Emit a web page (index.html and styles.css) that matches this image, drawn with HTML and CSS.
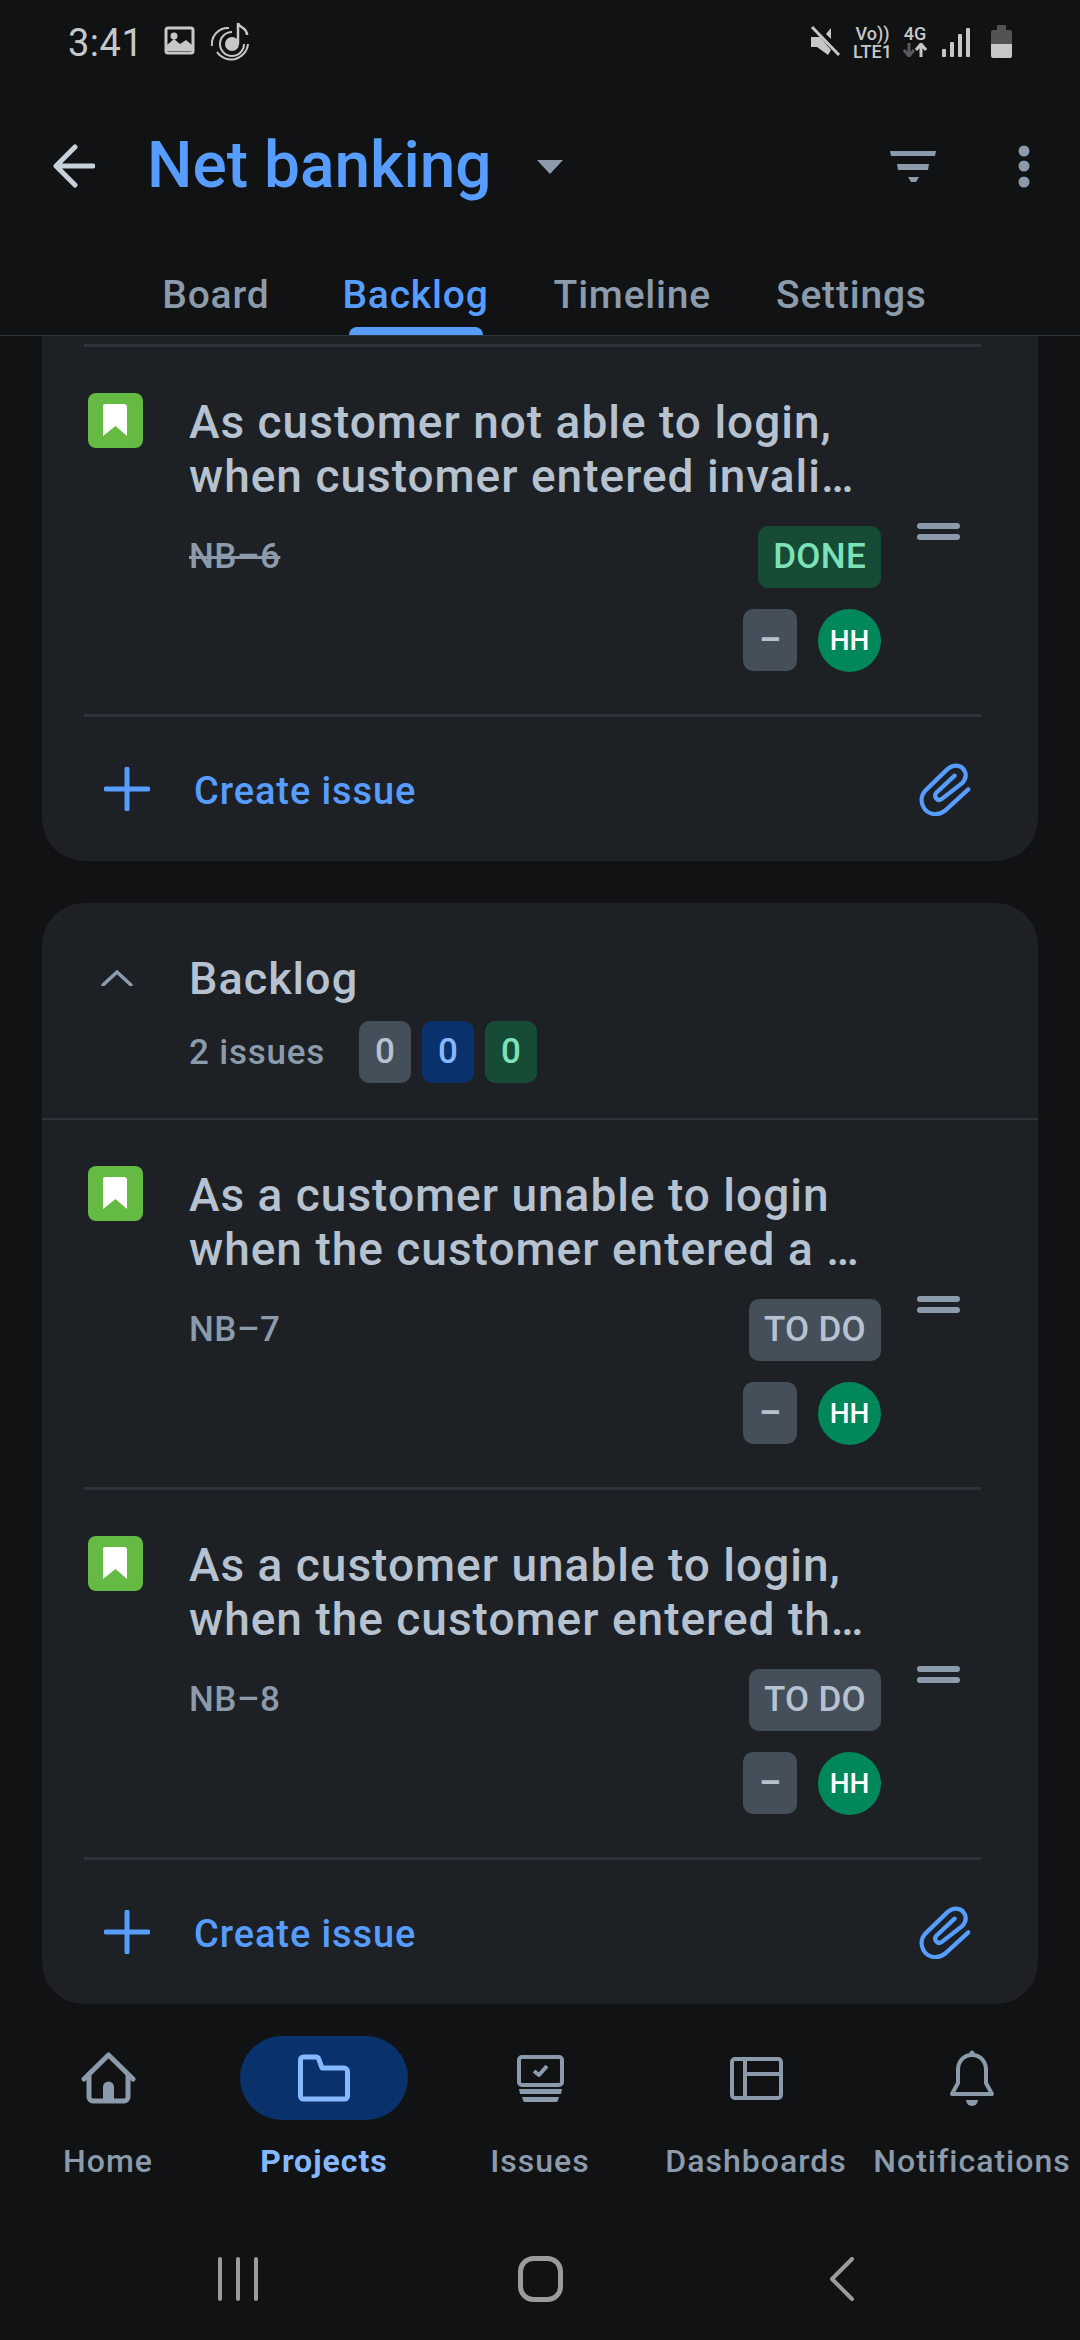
FILE: index.html
```html
<!DOCTYPE html>
<html lang="en">
<head>
    <meta charset="UTF-8">
    <meta name="viewport" content="width=device-width, initial-scale=1.0">
    <title>Net banking</title>
    <link rel="stylesheet" href="styles.css">
</head>
<body>

<svg class="icon-defs" width="0" height="0">
    <symbol id="bookmark" viewBox="0 0 55 55">
        <rect width="55" height="55" rx="8" fill="#65ba43"/>
        <path d="M17 11h19a3 3 0 0 1 3 3v29l-11.500-10L15 43V13a2 2 0 0 1 2-2z" fill="#fff"/>
    </symbol>
    <symbol id="drag" viewBox="0 0 43 17">
        <rect y="0" width="43" height="6" rx="3" fill="#8c9bab"/>
        <rect y="11" width="43" height="6" rx="3" fill="#8c9bab"/>
    </symbol>
    <symbol id="plus" viewBox="0 0 46 44">
        <path d="M23 2v40M2 22h42" stroke="#579dff" stroke-width="5" stroke-linecap="round" fill="none"/>
    </symbol>
    <symbol id="clip" viewBox="118 62 160 166">
        <path d="M268 146L196 212C170 232 140 220 130 200C120 180 124 160 140 146L204 84C225 66 250 72 258 92C264 108 258 118 248 128L186 176C174 184 160 170 170 156L226 104" stroke="#579dff" stroke-width="13" stroke-linecap="round" fill="none"/>
    </symbol>
</svg>

<div class="status-bar">
    <span class="clock">3:41</span>
    <svg class="st-image" width="31" height="29" viewBox="0 0 31 29">
        <rect x="2" y="2" width="27" height="25" rx="2" fill="none" stroke="#c6c8c7" stroke-width="3"/>
        <circle cx="10" cy="10" r="3.500" fill="#c6c8c7"/>
        <path d="M3 25v-6l7-6 6 5 6-4 6 5v6z" fill="#c6c8c7"/>
    </svg>
    <svg class="st-music" width="38" height="39" viewBox="0 0 38 39">
        <g fill="none" stroke="#c6c8c7" stroke-width="2">
            <path d="M21 10A12 12 0 1 0 33 22"/>
            <path d="M18 6A16 16 0 0 0 1 24"/>
            <path d="M6 30A17 17 0 0 0 37 22"/>
        </g>
        <circle cx="21" cy="22" r="7" fill="#c6c8c7"/>
        <path d="M27 22V1c1 5 9 4 9 12" fill="none" stroke="#c6c8c7" stroke-width="2.500"/>
    </svg>
    <div class="status-right">
        <svg class="st-mute" width="31" height="32" viewBox="0 0 31 32">
            <path d="M1 12h6l3 0 11 13-3 5-11-8H1z" fill="#c6c8c7"/>
            <path d="M16 9l5-6v11z" fill="#c6c8c7"/>
            <path d="M2 2l27 28" stroke="#c6c8c7" stroke-width="3"/>
        </svg>
        <div class="st-net">
            <span>Vo))</span>
            <span>LTE1</span>
        </div>
        <div class="st-net st-data">
            <span>4G</span>
            <svg width="24" height="14" viewBox="0 0 24 14">
                <path d="M6 0v12M1 7l5 6 5-6" stroke="#5a5b5c" stroke-width="3" fill="none"/>
                <path d="M18 14V2M13 7l5-6 5 6" stroke="#c6c8c7" stroke-width="3" fill="none"/>
            </svg>
        </div>
        <svg class="st-signal" width="28" height="30" viewBox="0 0 28 30">
            <rect x="0" y="22" width="4" height="8" rx="1" fill="#c6c8c7"/>
            <rect x="8" y="15" width="4" height="15" rx="1" fill="#c6c8c7"/>
            <rect x="16" y="7" width="4" height="23" rx="1" fill="#c6c8c7"/>
            <rect x="24" y="1" width="4" height="29" rx="1" fill="#c6c8c7"/>
        </svg>
        <svg class="st-battery" width="21" height="33" viewBox="0 0 21 33">
            <rect x="6" y="0" width="9" height="6" rx="1" fill="#525354"/>
            <path d="M2 5h17a2 2 0 0 1 2 2v12H0V7a2 2 0 0 1 2-2z" fill="#525354"/>
            <path d="M0 19h21v12a2 2 0 0 1-2 2H2a2 2 0 0 1-2-2z" fill="#c6c8c7"/>
        </svg>
    </div>
</div>

<header class="app-bar">
    <svg class="back" width="42" height="44" viewBox="0 0 42 44">
        <path d="M22 3L3 22l19 19M4 22h36" stroke="#c7d1db" stroke-width="5" stroke-linecap="round" stroke-linejoin="round" fill="none"/>
    </svg>
    <h1 class="project">Net banking</h1>
    <svg class="caret" width="26" height="14" viewBox="0 0 26 14">
        <path d="M0 0h26L13 14z" fill="#8c9bab"/>
    </svg>
    <svg class="filter" width="46" height="31" viewBox="0 0 46 31">
        <path d="M0 0h46l-1 5H1zM7 13h32l-1 6H8zM18 26h11l-3 5h-5z" fill="#8c9bab"/>
    </svg>
    <svg class="kebab" width="12" height="43" viewBox="0 0 12 43">
        <circle cx="6" cy="6" r="5.500" fill="#8c9bab"/>
        <circle cx="6" cy="21" r="5.500" fill="#8c9bab"/>
        <circle cx="6" cy="37" r="5.500" fill="#8c9bab"/>
    </svg>
</header>

<nav class="tabs">
    <div class="tab"><span>Board</span></div>
    <div class="tab active"><span>Backlog</span><i class="tab-mark"></i></div>
    <div class="tab"><span>Timeline</span></div>
    <div class="tab"><span>Settings</span></div>
</nav>

<main class="content">
    <section class="card card-cut">
        <div class="issue">
            <svg class="issue-type"><use href="#bookmark"/></svg>
            <div class="issue-body">
                <div class="issue-title">As customer not able to login,<br>when customer entered invali…</div>
                <div class="issue-meta">
                    <span class="issue-key done-key">NB–6</span>
                    <div class="issue-side">
                        <span class="lozenge lozenge-done">DONE</span>
                        <div class="issue-people">
                            <span class="priority">–</span>
                            <span class="avatar">HH</span>
                        </div>
                    </div>
                    <svg class="drag"><use href="#drag"/></svg>
                </div>
            </div>
        </div>
        <div class="create-row">
            <svg class="plus"><use href="#plus"/></svg>
            <span class="create-text">Create issue</span>
            <svg class="clip"><use href="#clip"/></svg>
        </div>
    </section>

    <section class="card">
        <div class="sprint-head">
            <svg class="chevron" width="32" height="16" viewBox="0 0 32 16">
                <path d="M2 15L16 2l14 13" stroke="#8c9bab" stroke-width="3.500" stroke-linecap="round" fill="none"/>
            </svg>
            <div>
                <div class="sprint-name">Backlog</div>
                <div class="sprint-info">
                    <span class="sprint-count">2 issues</span>
                    <span class="count count-grey">0</span>
                    <span class="count count-blue">0</span>
                    <span class="count count-green">0</span>
                </div>
            </div>
        </div>
        <div class="issue issue-first">
            <svg class="issue-type"><use href="#bookmark"/></svg>
            <div class="issue-body">
                <div class="issue-title">As a customer unable to login<br>when the customer entered a …</div>
                <div class="issue-meta">
                    <span class="issue-key">NB–7</span>
                    <div class="issue-side">
                        <span class="lozenge">TO DO</span>
                        <div class="issue-people">
                            <span class="priority">–</span>
                            <span class="avatar">HH</span>
                        </div>
                    </div>
                    <svg class="drag"><use href="#drag"/></svg>
                </div>
            </div>
        </div>
        <div class="issue">
            <svg class="issue-type"><use href="#bookmark"/></svg>
            <div class="issue-body">
                <div class="issue-title">As a customer unable to login,<br>when the customer entered th…</div>
                <div class="issue-meta">
                    <span class="issue-key">NB–8</span>
                    <div class="issue-side">
                        <span class="lozenge">TO DO</span>
                        <div class="issue-people">
                            <span class="priority">–</span>
                            <span class="avatar">HH</span>
                        </div>
                    </div>
                    <svg class="drag"><use href="#drag"/></svg>
                </div>
            </div>
        </div>
        <div class="create-row">
            <svg class="plus"><use href="#plus"/></svg>
            <span class="create-text">Create issue</span>
            <svg class="clip"><use href="#clip"/></svg>
        </div>
    </section>
</main>

<nav class="bottom-nav">
    <div class="nav-item">
        <div class="nav-icon">
            <svg width="55" height="52" viewBox="0 0 55 52">
                <g fill="none" stroke="#8c9bab" stroke-width="5" stroke-linecap="round" stroke-linejoin="round">
                    <path d="M3 27L27.500 3 52 27"/>
                    <path d="M8 23v22a4 4 0 0 0 4 4h31a4 4 0 0 0 4-4V23"/>
                </g>
                <path d="M22 49V35a5.500 5.500 0 0 1 11 0v14z" fill="#8c9bab"/>
            </svg>
        </div>
        <span class="nav-label">Home</span>
    </div>
    <div class="nav-item active">
        <div class="nav-icon">
            <svg width="52" height="48" viewBox="0 0 52 48">
                <path d="M2.500 6a3 3 0 0 1 3-3H18a3 3 0 0 1 2.800 2L24 14h22a3.500 3.500 0 0 1 3.500 3.500V42a3 3 0 0 1-3 3h-41a3 3 0 0 1-3-3z" fill="none" stroke="#85b8ff" stroke-width="5" stroke-linejoin="round"/>
            </svg>
        </div>
        <span class="nav-label">Projects</span>
    </div>
    <div class="nav-item">
        <div class="nav-icon">
            <svg width="47" height="47" viewBox="0 0 47 47">
                <rect x="2" y="2" width="43" height="28" rx="3" fill="none" stroke="#8c9bab" stroke-width="4"/>
                <path d="M17 16l5 4 8-9" fill="none" stroke="#8c9bab" stroke-width="4" stroke-linejoin="round"/>
                <path d="M2 34h43l-1 5H3zM5 42h37l-1 3a2 2 0 0 1-2 2H8a2 2 0 0 1-2-2z" fill="#8c9bab"/>
            </svg>
        </div>
        <span class="nav-label">Issues</span>
    </div>
    <div class="nav-item">
        <div class="nav-icon">
            <svg width="53" height="43" viewBox="0 0 53 43">
                <rect x="2" y="2" width="49" height="39" rx="3" fill="none" stroke="#8c9bab" stroke-width="4"/>
                <path d="M15 2v39M15 17h36" fill="none" stroke="#8c9bab" stroke-width="4"/>
            </svg>
        </div>
        <span class="nav-label">Dashboards</span>
    </div>
    <div class="nav-item">
        <div class="nav-icon">
            <svg width="46" height="56" viewBox="0 0 46 56">
                <circle cx="23" cy="3" r="2.500" fill="#8c9bab"/>
                <path d="M23 5C32 5 37 12 37 20v13l6 11H3l6-11V20C9 12 14 5 23 5z" fill="none" stroke="#8c9bab" stroke-width="4" stroke-linejoin="round"/>
                <path d="M17 50h12a6 6 0 0 1-12 0z" fill="#8c9bab"/>
            </svg>
        </div>
        <span class="nav-label">Notifications</span>
    </div>
</nav>

<div class="system-nav">
    <div class="sys-item">
        <svg width="40" height="44" viewBox="0 0 40 44">
            <path d="M2 2v40M20 2v40M38 2v40" stroke="#9a9b9c" stroke-width="4" stroke-linecap="round" fill="none"/>
        </svg>
    </div>
    <div class="sys-item">
        <svg width="45" height="46" viewBox="0 0 45 46">
            <rect x="2.500" y="2.500" width="40" height="41" rx="13" fill="none" stroke="#9a9b9c" stroke-width="5"/>
        </svg>
    </div>
    <div class="sys-item">
        <svg width="24" height="44" viewBox="0 0 24 44">
            <path d="M22 2L2 22l20 20" stroke="#9a9b9c" stroke-width="4" stroke-linecap="round" stroke-linejoin="round" fill="none"/>
        </svg>
    </div>
</div>

</body>
</html>
```

FILE: styles.css
```css
body {
    font-family: Roboto, "Noto Sans", sans-serif;
    font-weight: 500;
    margin: 0;
    padding: 0;
    width: 1080px;
    height: 2340px;
    overflow: hidden;
    display: flex;
    flex-direction: column;
    background-color: #101214;
    color: #b6c2cf;
}
.icon-defs {
    display: none;
}

/* status bar */
.status-bar {
    height: 101px;
    flex-shrink: 0;
    display: flex;
    align-items: flex-start;
    padding-left: 68px;
    padding-right: 68px;
    color: #c6c8c7;
}
.clock {
    font-size: 38px;
    font-weight: 400;
    line-height: 44px;
    margin-top: 21px;
    letter-spacing: 0.5px;
}
.st-image {
    margin-top: 26px;
    margin-left: 21px;
}
.st-music {
    margin-top: 22px;
    margin-left: 16px;
}
.status-right {
    margin-left: auto;
    display: flex;
    align-items: flex-start;
    padding-top: 25px;
}
.st-mute {
    margin-right: 12px;
}
.st-net {
    display: flex;
    flex-direction: column;
    align-items: center;
    font-size: 18px;
    font-weight: 500;
    line-height: 18px;
    margin-right: 11px;
}
.st-data {
    margin-right: 15px;
}
.st-signal {
    margin-top: 2px;
    margin-right: 21px;
}

/* app bar */
.app-bar {
    height: 130px;
    display: flex;
    align-items: center;
    padding-left: 53px;
    padding-right: 50px;
    flex-shrink: 0;
}
.project {
    margin: 0 0 0 52px;
    color: #579dff;
    font-size: 64px;
    font-weight: 500;
    line-height: 72px;
}
.caret {
    margin-left: 45px;
    margin-top: 2px;
}
.filter {
    margin-left: auto;
}
.kebab {
    margin-left: 82px;
}

/* tabs */
.tabs {
    height: 105px;
    flex-shrink: 0;
    display: flex;
    justify-content: center;
    gap: 65px;
    border-bottom: 1px solid #2c333a;
    box-sizing: border-box;
    padding-top: 41px;
    padding-left: 9px;
}
.tab {
    display: flex;
    flex-direction: column;
    align-items: center;
    font-size: 39px;
    line-height: 46px;
    letter-spacing: 0.8px;
    color: #8c9bab;
}
.tab:first-child {
    margin-right: 8px;
}
.tab.active {
    color: #579dff;
}
.tab-mark {
    display: block;
    width: 134px;
    height: 8px;
    margin-top: auto;
    border-radius: 8px 8px 0 0;
    background-color: #579dff;
}

/* cards */
.content {
    flex: 1;
    min-height: 0;
    overflow: hidden;
    padding: 0 42px;
    display: flex;
    flex-direction: column;
    gap: 42px;
}
.card {
    background-color: #1d2125;
    border-radius: 42px;
    flex-shrink: 0;
}
.card-cut {
    border-radius: 0 0 42px 42px;
    padding-top: 8px;
}
.issue {
    margin: 0 57px 0 42px;
    padding: 46px 0 42px 4px;
    border-top: 3px solid #2c333a;
    display: flex;
}
.issue-first {
    border-top: none;
    padding-top: 46px;
}
.issue-type {
    width: 55px;
    height: 55px;
    flex-shrink: 0;
    margin-right: 46px;
}
.issue-body {
    flex: 1;
    min-width: 0;
}
.issue-title {
    margin-top: 2px;
    font-size: 46px;
    line-height: 54px;
    letter-spacing: 1px;
    white-space: nowrap;
}
.issue-meta {
    display: flex;
    margin-top: 23px;
}
.issue-key {
    font-size: 35px;
    line-height: 62px;
    color: #8c9bab;
    letter-spacing: 0.5px;
}
.done-key {
    text-decoration: line-through;
}
.issue-side {
    margin-left: auto;
    display: flex;
    flex-direction: column;
    align-items: flex-end;
    gap: 21px;
}
.lozenge {
    height: 62px;
    padding: 0 15px;
    border-radius: 10px;
    background-color: #454f59;
    font-size: 35px;
    line-height: 62px;
    letter-spacing: 0.3px;
}
.lozenge-done {
    background-color: #164b35;
    color: #7ee2b8;
}
.issue-people {
    display: flex;
    gap: 21px;
}
.priority {
    width: 54px;
    height: 62px;
    border-radius: 10px;
    background-color: #454f59;
    text-align: center;
    font-size: 34px;
    font-weight: 700;
    line-height: 60px;
}
.avatar {
    width: 63px;
    height: 63px;
    border-radius: 50%;
    background-color: #00875a;
    color: #fff;
    text-align: center;
    font-size: 28px;
    font-weight: 500;
    line-height: 63px;
}
.drag {
    width: 43px;
    height: 17px;
    margin: -3px 21px 0 36px;
}

/* create issue row */
.create-row {
    margin: 0 57px 0 42px;
    height: 144px;
    border-top: 3px solid #2c333a;
    display: flex;
    align-items: center;
    padding-left: 20px;
    padding-right: 9px;
}
.plus {
    width: 46px;
    height: 44px;
    margin-right: 44px;
}
.create-text {
    color: #579dff;
    font-size: 38px;
    font-weight: 500;
    letter-spacing: 0.9px;
    margin-top: 3px;
}
.clip {
    width: 53px;
    height: 54px;
    margin-left: auto;
}

/* sprint header */
.sprint-head {
    display: flex;
    padding: 49px 0 35px 59px;
    border-bottom: 2px solid #2c333a;
}
.chevron {
    margin-top: 18px;
    margin-right: 56px;
}
.sprint-name {
    font-size: 45px;
    line-height: 54px;
    letter-spacing: 1px;
}
.sprint-info {
    display: flex;
    align-items: center;
    margin-top: 15px;
}
.sprint-count {
    width: 136px;
    margin-right: 34px;
    font-size: 35px;
    color: #8c9bab;
    letter-spacing: 0.8px;
    white-space: nowrap;
}
.count {
    width: 52px;
    height: 62px;
    margin-right: 11px;
    border-radius: 10px;
    text-align: center;
    font-size: 35px;
    line-height: 62px;
}
.count-grey {
    background-color: #454f59;
}
.count-blue {
    background-color: #09326c;
    color: #85b8ff;
}
.count-green {
    background-color: #164b35;
    color: #7ee2b8;
}

/* bottom navigation */
.bottom-nav {
    flex-shrink: 0;
    display: grid;
    grid-template-columns: repeat(5, 216px);
    padding-top: 32px;
}
.nav-item {
    display: flex;
    flex-direction: column;
    align-items: center;
    color: #8c9bab;
}
.nav-icon {
    width: 168px;
    height: 84px;
    border-radius: 42px;
    display: flex;
    align-items: center;
    justify-content: center;
}
.nav-label {
    margin-top: 21px;
    font-size: 32px;
    line-height: 40px;
    letter-spacing: 1px;
    white-space: nowrap;
}
.nav-item.active {
    color: #85b8ff;
}
.nav-item.active .nav-icon {
    background-color: #09326c;
}
.nav-item.active .nav-label {
    font-weight: 700;
}

/* android buttons */
.system-nav {
    flex-shrink: 0;
    height: 60px;
    margin: 68px 0 31px;
    padding: 0 87px;
    display: flex;
}
.sys-item {
    flex: 1;
    display: flex;
    align-items: center;
    justify-content: center;
}
```
